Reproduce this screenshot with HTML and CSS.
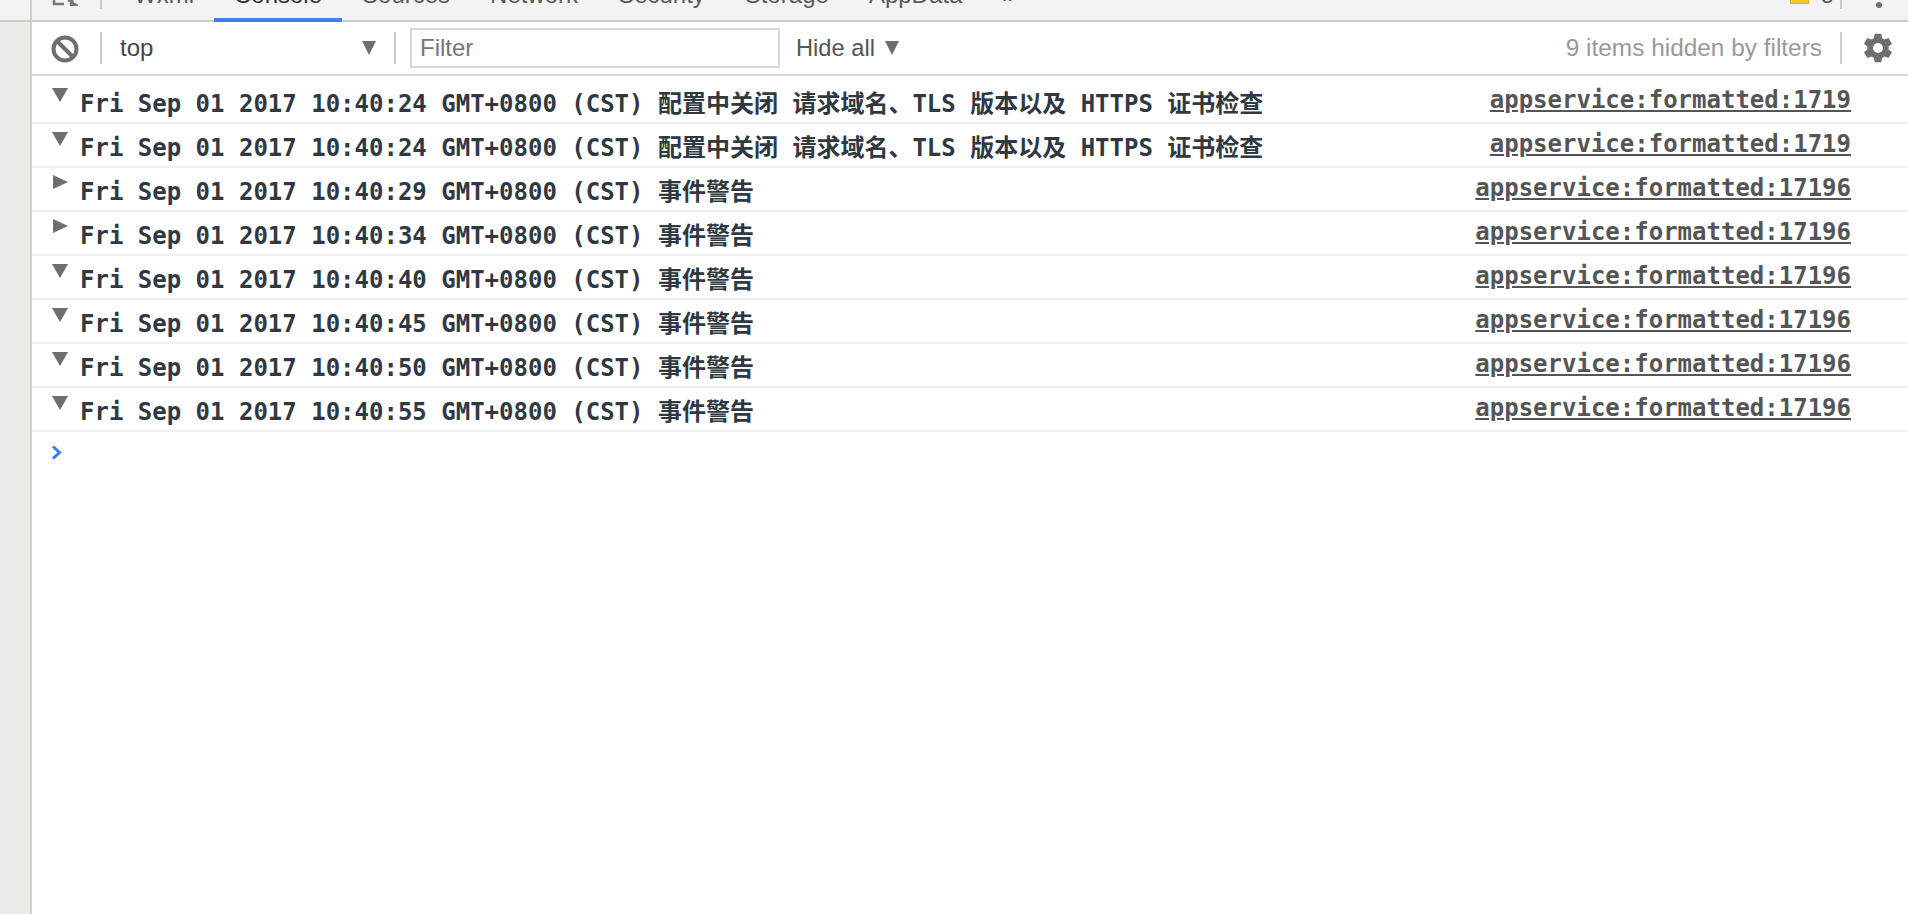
FILE: index.html
```html
<!DOCTYPE html>
<html lang="zh">
<head>
<meta charset="utf-8">
<title>Console</title>
<link rel="stylesheet" href="styles.css">
</head>
<body>
<aside class="side"><div class="side-top"></div></aside>
<main class="main">
  <nav class="tabbar">
    <svg class="inspect" width="28" height="6" viewBox="0 0 28 6"><path d="M2 0V4H12" fill="none" stroke="#777" stroke-width="2.4"/><path d="M16 0L26 6M19 0V6H22L20 0" fill="#777" stroke="#777" stroke-width="2.4"/></svg>
    <span class="tab-sep"></span>
    <span class="tab tab-first">Wxml</span>
    <span class="tab tab-active">Console</span>
    <span class="tab">Sources</span>
    <span class="tab">Network</span>
    <span class="tab">Security</span>
    <span class="tab">Storage</span>
    <span class="tab">AppData</span>
    <span class="tab tab-more">»</span>
    <span class="warn-icon"></span>
    <span class="warn-count">3</span>
    <span class="tab-sep tab-sep-right"></span>
    <span class="dot"></span>
  </nav>
  <div class="toolbar">
    <svg class="block-icon" width="30" height="30" viewBox="0 0 30 30"><circle cx="15" cy="15" r="11.5" fill="none" stroke="#6e6e6e" stroke-width="4"/><path d="M7 7L23 23" stroke="#6e6e6e" stroke-width="4"/></svg>
    <span class="tool-sep"></span>
    <div class="context"><span>top</span><i class="caret"></i></div>
    <span class="tool-sep"></span>
    <div class="filter">Filter</div>
    <div class="levels"><span>Hide all</span><i class="caret"></i></div>
    <span class="hidden-count">9 items hidden by filters</span>
    <span class="tool-sep"></span>
    <svg class="gear" width="34" height="34" viewBox="0 0 24 24"><path fill="#6e6e6e" d="M19.43 12.98c.04-.32.07-.64.07-.98s-.03-.66-.07-.98l2.11-1.65c.19-.15.24-.42.12-.64l-2-3.46c-.12-.22-.39-.3-.61-.22l-2.49 1c-.52-.4-1.08-.73-1.69-.98l-.38-2.65C14.46 2.18 14.25 2 14 2h-4c-.25 0-.46.18-.49.42l-.38 2.65c-.61.25-1.17.59-1.69.98l-2.49-1c-.23-.09-.49 0-.61.22l-2 3.46c-.13.22-.07.49.12.64l2.11 1.65c-.04.32-.07.65-.07.98s.03.66.07.98l-2.11 1.65c-.19.15-.24.42-.12.64l2 3.46c.12.22.39.3.61.22l2.49-1c.52.4 1.08.73 1.69.98l.38 2.65c.03.24.24.42.49.42h4c.25 0 .46-.18.49-.42l.38-2.65c.61-.25 1.17-.59 1.69-.98l2.49 1c.23.09.49 0 .61-.22l2-3.46c.12-.22.07-.49-.12-.64l-2.11-1.65zM12 15.5c-1.93 0-3.5-1.57-3.5-3.5s1.57-3.5 3.5-3.5 3.5 1.57 3.5 3.5-1.57 3.5-3.5 3.5z"/></svg>
  </div>
  <div class="log">
    <div class="row"><i class="tri-down"></i><span class="msg">Fri Sep 01 2017 10:40:24 GMT+0800 (CST) 配置中关闭 请求域名、TLS 版本以及 HTTPS 证书检查</span><a class="src">appservice:formatted:1719</a></div>
    <div class="row"><i class="tri-down"></i><span class="msg">Fri Sep 01 2017 10:40:24 GMT+0800 (CST) 配置中关闭 请求域名、TLS 版本以及 HTTPS 证书检查</span><a class="src">appservice:formatted:1719</a></div>
    <div class="row"><i class="tri-right"></i><span class="msg">Fri Sep 01 2017 10:40:29 GMT+0800 (CST) 事件警告</span><a class="src">appservice:formatted:17196</a></div>
    <div class="row"><i class="tri-right"></i><span class="msg">Fri Sep 01 2017 10:40:34 GMT+0800 (CST) 事件警告</span><a class="src">appservice:formatted:17196</a></div>
    <div class="row"><i class="tri-down"></i><span class="msg">Fri Sep 01 2017 10:40:40 GMT+0800 (CST) 事件警告</span><a class="src">appservice:formatted:17196</a></div>
    <div class="row"><i class="tri-down"></i><span class="msg">Fri Sep 01 2017 10:40:45 GMT+0800 (CST) 事件警告</span><a class="src">appservice:formatted:17196</a></div>
    <div class="row"><i class="tri-down"></i><span class="msg">Fri Sep 01 2017 10:40:50 GMT+0800 (CST) 事件警告</span><a class="src">appservice:formatted:17196</a></div>
    <div class="row"><i class="tri-down"></i><span class="msg">Fri Sep 01 2017 10:40:55 GMT+0800 (CST) 事件警告</span><a class="src">appservice:formatted:17196</a></div>
    <svg class="prompt" width="13" height="15" viewBox="0 0 13 15"><path d="M3 1.5L9.5 7.5L3 13.5" fill="none" stroke="#367cf1" stroke-width="3"/></svg>
  </div>
</main>
</body>
</html>
```

FILE: styles.css
```css
* { box-sizing: border-box; }
html, body { height: 100%; }
body {
  margin: 0;
  display: flex;
  height: 914px;
  overflow: hidden;
  background: #fff;
  font-family: "Liberation Sans", Arial, sans-serif;
  font-size: 24px;
  color: #333;
}
.side {
  flex: 0 0 32px;
  background: #ecebe8;
  border-right: 2px solid #d0d0d0;
}
.side-top {
  height: 22px;
  background: #f3f3f3;
  border-bottom: 2px solid #ccc;
}
.main { flex: 1; min-width: 0; display: flex; flex-direction: column; }

.tabbar {
  height: 22px;
  flex: none;
  display: flex;
  align-items: flex-end;
  background: #f3f3f3;
  box-shadow: inset 0 -2px #ccc;
  overflow: hidden;
}
.inspect { flex: none; align-self: flex-start; margin-left: 20px; }
.tab-sep { flex: none; align-self: flex-start; width: 2px; height: 9px; margin-left: 20px; background: #ccc; }
.tab {
  flex: none;
  padding: 0 20px 11px;
  line-height: 24px;
  color: #5a5a5a;
  border-bottom: 4px solid transparent;
}
.tab-first { margin-left: 12px; }
.tab-active { color: #333; border-bottom-color: #4080e8; }
.warn-icon {
  flex: none;
  align-self: flex-start;
  width: 19px;
  height: 4px;
  margin-left: auto;
  background: #f5c62c;
  border: 1px solid #e8a93a;
  border-top: 0;
}
.warn-count {
  flex: none;
  width: 12px;
  margin-left: 12px;
  padding-bottom: 14px;
  line-height: 24px;
  font-size: 22px;
  color: #555;
}
.tab-sep-right { margin-left: 7px; }
.dot {
  flex: none;
  align-self: flex-start;
  width: 6px;
  height: 6px;
  margin: 2px 26px 0 34px;
  border-radius: 50%;
  background: #6e6e6e;
}

.toolbar {
  flex: none;
  height: 54px;
  display: flex;
  align-items: center;
  border-bottom: 2px solid #d8d8d8;
  color: #5a5a5a;
}
.block-icon { flex: none; margin: 2px 20px 0 18px; }
.tool-sep { flex: none; width: 2px; height: 32px; background: #ccc; }
.context {
  flex: none;
  width: 292px;
  display: flex;
  align-items: center;
  justify-content: space-between;
  padding: 0 18px;
  color: #444;
}
.caret {
  flex: none;
  width: 0;
  height: 0;
  border-left: 7.5px solid transparent;
  border-right: 7.5px solid transparent;
  border-top: 14px solid #6e6e6e;
}
.filter {
  flex: none;
  width: 370px;
  height: 40px;
  margin-left: 14px;
  padding-left: 8px;
  line-height: 36px;
  border: 2px solid #d8d8d8;
  color: #757575;
}
.levels { flex: none; display: flex; align-items: center; gap: 10px; margin-left: 16px; font-size: 23.7px; color: #555; }
.hidden-count { margin-left: auto; margin-right: 18px; font-size: 24.4px; color: #999; }
.gear { flex: none; margin: 0 13px 0 19px; }

.log { flex: 1; padding-top: 4px; }
.row {
  height: 44px;
  display: flex;
  align-items: flex-start;
  border-bottom: 2px solid #f0f0f0;
  font-family: "DejaVu Sans Mono", "Noto Sans CJK SC", monospace;
  font-weight: 700;
  font-size: 24px;
  line-height: 32px;
  color: #303942;
}
.tri-down, .tri-right { flex: none; width: 0; height: 0; }
.tri-down {
  margin: 8px 12px 0 20px;
  border-left: 8px solid transparent;
  border-right: 8px solid transparent;
  border-top: 14px solid #6e6e6e;
}
.tri-right {
  margin: 7px 12px 0 21px;
  border-top: 7.5px solid transparent;
  border-bottom: 7.5px solid transparent;
  border-left: 15px solid #6e6e6e;
}
.msg { flex: none; padding-top: 8px; white-space: pre; }
.src {
  margin-left: auto;
  margin-right: 57px;
  padding-top: 4px;
  color: #555;
  text-decoration: underline;
}
.prompt { display: block; margin: 13px 0 0 18px; }
```
